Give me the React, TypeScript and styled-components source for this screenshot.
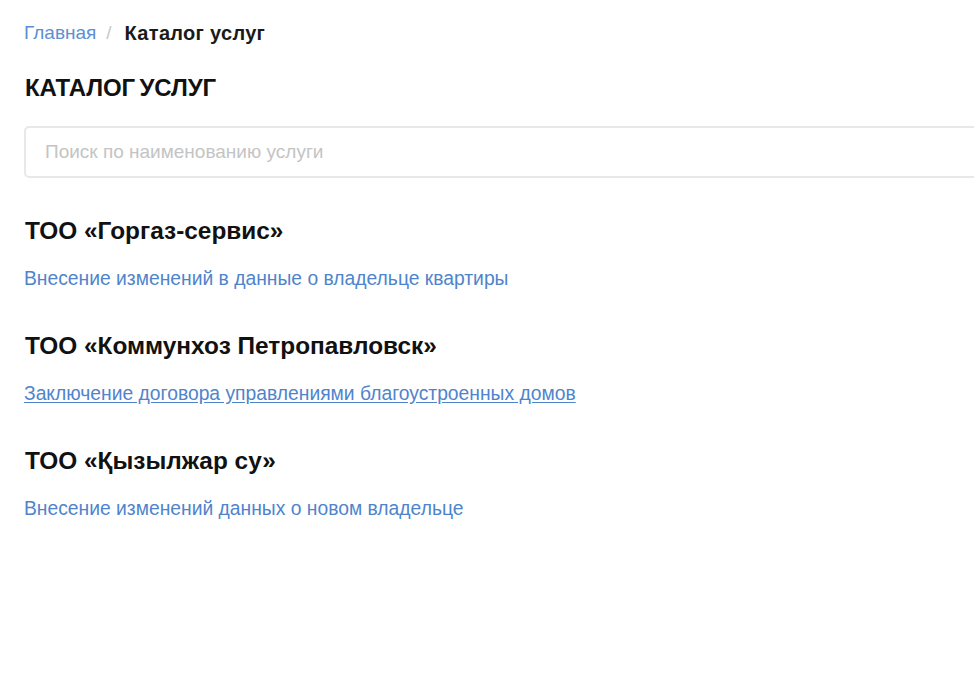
import React from "react";
import styled, { createGlobalStyle } from "styled-components";

const GlobalStyle = createGlobalStyle`
  html, body {
    margin: 0;
    padding: 0;
    background: #ffffff;
    overflow: hidden;
  }
  body {
    font-family: "Liberation Sans", Arial, sans-serif;
  }
`;

const Page = styled.main`
  padding: 20px 0 0 24px;
  width: 1100px;
`;

const Breadcrumbs = styled.nav`
  display: flex;
  align-items: center;
  gap: 10px;
  font-size: 19px;
  line-height: 26px;
`;

const CrumbLink = styled.a`
  color: #5b8fd3;
  text-decoration: none;
`;

const CrumbDivider = styled.span`
  color: #c8c8c8;
  margin-right: 3px;
`;

const CrumbCurrent = styled.span`
  color: #1a1a1a;
  font-weight: 700;
  font-size: 20px;
  letter-spacing: 0.3px;
`;

const Title = styled.h1`
  margin: 28px 0 0 1px;
  font-size: 24px;
  line-height: 28px;
  font-weight: 700;
  color: #111;
  letter-spacing: -0.1px;
  word-spacing: -2px;
`;

const SearchInput = styled.input`
  display: block;
  box-sizing: border-box;
  margin-top: 24px;
  width: 1000px;
  height: 52px;
  padding: 0 19px;
  border: 2px solid #e8e8e8;
  border-radius: 5px;
  font-family: inherit;
  font-size: 19px;
  color: #333;
  outline: none;
  &::placeholder {
    color: #c4c4c4;
  }
`;

const Sections = styled.div`
  display: flex;
  flex-direction: column;
  gap: 39px;
  margin-top: 39px;
`;

const Section = styled.section`
  display: flex;
  flex-direction: column;
  gap: 20px;
`;

const CompanyName = styled.h2`
  margin: 0 0 0 1px;
  font-size: 24.4px;
  line-height: 28px;
  font-weight: 700;
  color: #111;
`;

const ServiceLink = styled.a<{ $underline?: boolean }>`
  font-size: 19.3px;
  line-height: 28px;
  color: #4f84cc;
  text-decoration: ${(p) => (p.$underline ? "underline" : "none")};
  text-underline-offset: 2px;
  width: fit-content;
`;

const catalog = [
  {
    company: "ТОО «Горгаз-сервис»",
    service: "Внесение изменений в данные о владельце квартиры",
  },
  {
    company: "ТОО «Коммунхоз Петропавловск»",
    service: "Заключение договора управлениями благоустроенных домов",
    underline: true,
  },
  {
    company: "ТОО «Қызылжар су»",
    service: "Внесение изменений данных о новом владельце",
  },
];

export default function App() {
  return (
    <>
      <GlobalStyle />
      <Page>
        <Breadcrumbs>
          <CrumbLink href="#">Главная</CrumbLink>
          <CrumbDivider>/</CrumbDivider>
          <CrumbCurrent>Каталог услуг</CrumbCurrent>
        </Breadcrumbs>
        <Title>КАТАЛОГ УСЛУГ</Title>
        <SearchInput placeholder="Поиск по наименованию услуги" />
        <Sections>
          {catalog.map((item) => (
            <Section key={item.company}>
              <CompanyName>{item.company}</CompanyName>
              <ServiceLink href="#" $underline={item.underline}>
                {item.service}
              </ServiceLink>
            </Section>
          ))}
        </Sections>
      </Page>
    </>
  );
}
